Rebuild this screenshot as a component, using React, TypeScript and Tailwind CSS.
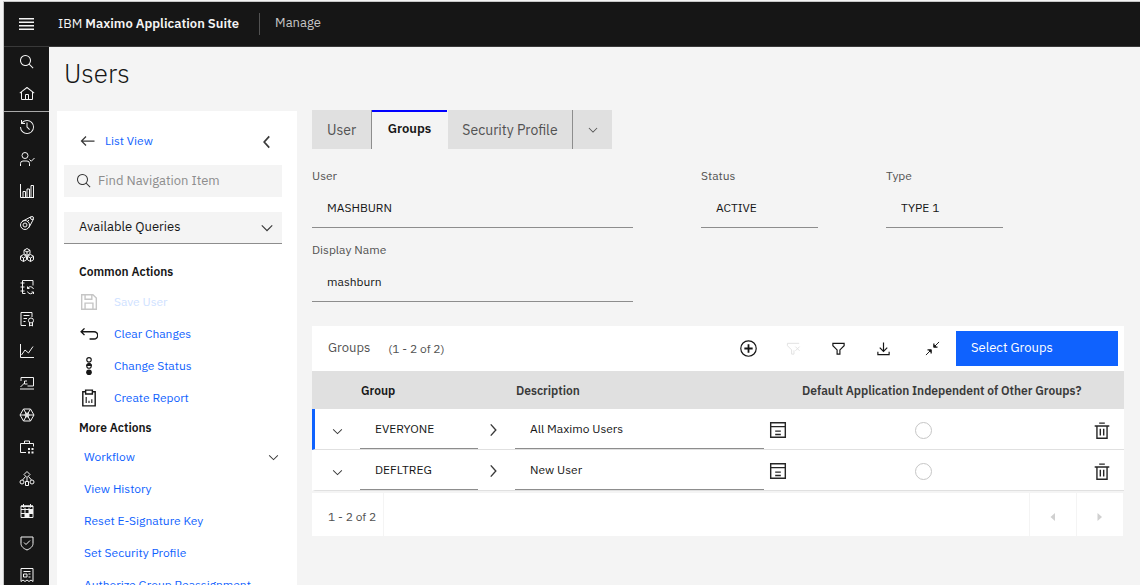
import React from "react";

type IconProps = { className?: string; children?: React.ReactNode };

/** 32-unit icon canvas: outlines by default, children may opt into fills. */
function Icon({ className = "size-4", children }: IconProps) {
  return (
    <svg
      viewBox="0 0 32 32"
      className={`shrink-0 ${className}`}
      fill="none"
      stroke="currentColor"
      strokeWidth={2}
      aria-hidden="true"
    >
      {children}
    </svg>
  );
}

const solid = { fill: "currentColor", stroke: "none" } as const;

const SearchGlyph = () => (
  <path
    {...solid}
    d="M29,27.586l-7.552-7.552a11.018,11.018,0,1,0-1.414,1.414L27.586,29ZM4,13a9,9,0,1,1,9,9A9.01,9.01,0,0,1,4,13Z"
  />
);
const ChevronDown = () => (
  <path {...solid} d="M16 22 6 12l1.4-1.4 8.6 8.6 8.6-8.6L26 12z" />
);

const railTop: [string, React.ReactNode][] = [
  ["Search", <SearchGlyph />],
  [
    "Home",
    <path
      {...solid}
      d="M16.612,2.214a1.01,1.01,0,0,0-1.243,0L1,13.42l1.243,1.571L4,13.62V26a2,2,0,0,0,2,2H26a2,2,0,0,0,2-2V13.63L29.757,15,31,13.428ZM18,26H14V18h4Zm2,0V18a2,2,0,0,0-2-2H14a2,2,0,0,0-2,2v8H6V12.06l10-7.79,10,7.8V26Z"
    />,
  ],
];

const railItems: [string, React.ReactNode][] = [
  [
    "Recent",
    <g {...solid}>
      <path d="M20.59 22 15 16.41V7h2v8.58l5 5.01z" />
      <path d="M16,2A13.94,13.94,0,0,0,6,6.23V2H4v8h8V8H7.08A12,12,0,1,1,4,16H2A14,14,0,1,0,16,2Z" />
    </g>,
  ],
  [
    "Administration",
    <>
      <circle cx="12" cy="9" r="6" />
      <path d="M3 30v-5a5 5 0 0 1 5-5h8a5 5 0 0 1 5 5v5M21 17l3.5 3.5L31 14" />
    </>,
  ],
  [
    "Analytics",
    <path d="M3 2v27h27M8 29V17h5v12M16 29V12h5v17M24 29V5h5v24" />,
  ],
  [
    "Assets",
    <>
      <circle cx="12" cy="20" r="9" />
      <circle cx="12" cy="20" r="4" />
      <circle cx="26" cy="6" r="3" />
      <path d="M6 13 24 3.5M20 25l9-17M17 13l3-3" />
    </>,
  ],
  [
    "Inventory",
    <path d="m16 3 6 3.5v7L16 17l-6-3.5v-7zM16 9v8M10 6.5l6 3.5 6-3.5M9 15l6 3.5v7L9 29l-6-3.5v-7zM9 22v7M3 18.5 9 22l6-3.5M23 15l6 3.5v7L23 29l-6-3.5v-7zM23 22v7M17 18.5l6 3.5 6-3.5" />,
  ],
  [
    "Planning",
    <>
      <path d="M13 29H7V3h21v10M3 8h8M3 16h8M3 24h8" />
      <path d="M29 20a6.5 6.5 0 0 0-12-1v-4M17 19h4M17 25a6.5 6.5 0 0 0 12 1v4M29 26h-4" />
    </>,
  ],
  [
    "Contracts",
    <>
      <path d="M14 29H4V3h22v9M9 9h12M9 15h7M9 21h4" />
      <circle cx="24" cy="19" r="5" />
      <path d="M21 23v7l3-2 3 2v-7" />
    </>,
  ],
  ["Performance", <path d="M3 2v27h27M5 24l7-10 7 6 9-13" />],
  [
    "Self Service",
    <>
      <path d="M4 12V5h25v17H17M2 28h28" />
      <path d="M3 24l8-8M16 12h-5v6h6" />
    </>,
  ],
  [
    "Service Desk",
    <>
      <path d="M9 4h14l7 12-7 12H9L2 16z" />
      <path d="M9 4l14 24M23 4 9 28M2 16h28" />
      <circle cx="16" cy="16" r="4" />
    </>,
  ],
  [
    "Work Orders",
    <>
      <path d="M14 27H3V9h26v6M11 9V4h10v5" />
      <path {...solid} d="M18 18h4v4h-4zM25 18h4v4h-4zM18 25h4v4h-4zM25 25h4v4h-4z" />
    </>,
  ],
  [
    "Integration",
    <>
      <path d="m16 1 6 6-6 6-6-6z" />
      <path d="M16 13v8M13 11l-6 7M19 11l6 7" />
      <circle cx="6" cy="22" r="4" />
      <path d="M13 21h6v8h-6z" />
      <circle cx="26" cy="22" r="4" />
    </>,
  ],
  [
    "Scheduling",
    <>
      <path d="M4 6h24v23H4zM9 2v7M23 2v7M4 13h24M12 9v20M20 9v20M4 21h24" />
      <path {...solid} d="M20 13h8v8h-8zM12 21h8v8h-8zM4 5h24v3H4z" />
    </>,
  ],
  [
    "Security",
    <path d="M4 4h24v13c0 6-5 10-12 13C9 27 4 23 4 17zM10 15l4 4 8-8" />,
  ],
  [
    "Financial",
    <path d="M4 3h24v26l-4-3-4 3-4-3-4 3-4-3-4 3zM9 9h14M9 14h7v6H9zM19 14h4M19 20h4" />,
  ],
];

function RailButton({ label, glyph }: { label: string; glyph: React.ReactNode }) {
  return (
    <button aria-label={label} className="flex h-8 w-full items-center justify-center pb-0.5">
      <Icon>{glyph}</Icon>
    </button>
  );
}

const commonActions: { label: string; disabled?: boolean; glyph: React.ReactNode }[] = [
  {
    label: "Save User",
    disabled: true,
    glyph: <path strokeWidth={2.5} d="M3 3h20l6 6v20H3zM9 3v8h12V3M9 29V18h14v11" />,
  },
  {
    label: "Clear Changes",
    glyph: <path strokeWidth={2.5} d="M8 6 2 12l6 6M2 12h23a5 5 0 0 1 0 13h-8" />,
  },
  {
    label: "Change Status",
    glyph: (
      <>
        <circle cx="16" cy="5" r="4" />
        <circle cx="16" cy="16" r="4" />
        <path {...solid} d="M11 16h10a5 5 0 0 0-10-1z" />
        <circle cx="16" cy="27" r="5" {...solid} />
      </>
    ),
  },
  {
    label: "Create Report",
    glyph: (
      <>
        <path strokeWidth={2.5} d="M10 5H5v25h22V5h-5M10 2h12v7H10z" />
        <path d="M11 14v11M16 21v4M21 18v7" />
      </>
    ),
  },
];

const moreActions = [
  "Workflow",
  "View History",
  "Reset E-Signature Key",
  "Set Security Profile",
  "Authorize Group Reassignment",
];

function Field({ id, label, value, className }: { id: string; label: string; value: string; className: string }) {
  return (
    <div className={className}>
      <label htmlFor={id} className="block h-4 leading-4 text-[#525252]">
        {label}
      </label>
      <input
        id={id}
        defaultValue={value}
        className="mt-1 block h-10 w-full border-b border-[#8d8d8d] bg-transparent px-[15px] text-[#161616] outline-none"
      />
    </div>
  );
}

const groups = [
  { name: "EVERYONE", description: "All Maximo Users", active: true },
  { name: "DEFLTREG", description: "New User", active: false },
];

const toolButton = "flex size-8 items-center justify-center";
const cell = "border-b border-[#e0e0e0] p-0";
const cellInput = "block h-10 w-full border-b border-[#8d8d8d] px-[15px] outline-none";
const headCell = "p-0 pt-0.5 pl-px font-semibold";

function GroupsTable() {
  return (
    <section className="mt-6">
      <div className="flex h-[45px] items-center bg-white pr-1.5 pl-4">
        <h2 className="pb-0.5 text-[13px] text-[#525252]">Groups</h2>
        <span className="ml-[18px] text-[#525252]">(1 - 2 of 2)</span>
        <div className="ml-auto flex items-center gap-[13px] pr-2">
          <button aria-label="New row" className={toolButton}>
            <Icon className="size-[19px]">
              <circle cx="16" cy="16" r="13" />
              <path strokeWidth={3} d="M16 9v14M9 16h14" />
            </Icon>
          </button>
          <button aria-label="Clear filter" disabled className={`${toolButton} text-[#e0e0e0]`}>
            <Icon className="size-[15px]">
              <path d="M28 5H3v5l9 9v9h5v-8M20 12l9 9M29 12l-9 9" />
            </Icon>
          </button>
          <button aria-label="Filter" className={toolButton}>
            <Icon className="size-[15px]">
              <path strokeWidth={2.5} d="M4 5h24v5l-9 9v9h-6v-9l-9-9z" />
            </Icon>
          </button>
          <button aria-label="Download" className={toolButton}>
            <Icon className="size-[15px]">
              <path strokeWidth={2.5} d="M16 3v19M8 14l8 8 8-8M4 23v6h24v-6" />
            </Icon>
          </button>
          <button aria-label="Collapse" className={`${toolButton} ml-1`}>
            <Icon className="size-[15px]">
              <path d="M19 5v8h8M19 13 30 2M5 19h8v8M13 19 2 30" />
              <path {...solid} d="M18 6v8h8zM6 18h8v8z" />
            </Icon>
          </button>
        </div>
        <button className="h-[35px] w-[162px] bg-[#0f62fe] px-[15px] pb-0.5 text-left text-[13px] text-white">
          Select Groups
        </button>
      </div>

      <table className="w-full table-fixed border-separate border-spacing-0 bg-white">
        <colgroup>
          <col className="w-12" />
          <col className="w-[118px]" />
          <col className="w-[37px]" />
          <col />
          <col className="w-[38px]" />
          <col className="w-[110px]" />
          <col className="w-[168px]" />
          <col className="w-11" />
        </colgroup>
        <thead>
          <tr className="h-[38px] bg-[#e0e0e0] text-left whitespace-nowrap text-[#393939]">
            <td />
            <th className={`${headCell} text-[#161616]`}>Group</th>
            <td />
            <th className={headCell}>Description</th>
            <td />
            <th className="p-0 pt-0.5 font-semibold">Default Application</th>
            <th className="p-0 pt-0.5 font-semibold">Independent of Other Groups?</th>
            <td />
          </tr>
        </thead>
        <tbody>
          {groups.map((g) => (
            <tr key={g.name} className="h-[41px]">
              <td className={`${cell} border-l-[3px] ${g.active ? "border-l-[#0f62fe]" : "border-l-white"}`}>
                <button aria-label="Row details" className="ml-1.5 flex size-8 items-center justify-center pt-1">
                  <Icon className="size-[15px] text-[#393939]"><ChevronDown /></Icon>
                </button>
              </td>
              <td className={`${cell} align-top`}>
                <input aria-label="Group" defaultValue={g.name} className={cellInput} />
              </td>
              <td className={cell}>
                <button aria-label="Group menu" className="mx-auto flex size-7 items-center justify-center pt-0.5 pr-2">
                  <Icon className="size-[18px] text-[#393939]">
                    <path strokeWidth={2.5} d="m12 6 9 10-9 10" />
                  </Icon>
                </button>
              </td>
              <td className={`${cell} align-top`}>
                <input aria-label="Description" defaultValue={g.description} className={cellInput} />
              </td>
              <td className={cell}>
                <button aria-label="Long description" className="flex size-7 items-center justify-center pt-0.5">
                  <Icon className="size-[18px] text-[#262626]">
                    <path strokeWidth={2.5} d="M3 3h26v26H3zM3 10h26M11 18h10M11 24h10" />
                  </Icon>
                </button>
              </td>
              <td className={cell} />
              <td className={cell}>
                <input
                  type="radio"
                  aria-label={`Independent of Other Groups: ${g.name}`}
                  className="mt-0.5 ml-[3px] block size-[17px] appearance-none rounded-full border border-[#c6c6c6] bg-white"
                />
              </td>
              <td className={cell}>
                <button aria-label="Delete row" className="mx-auto flex size-7 items-center justify-center pt-1">
                  <Icon className="size-[18px] text-[#262626]">
                    <path strokeWidth={2.5} d="M3 7h26M7 7v22h18V7M11 2h10M13 12v12M19 12v12" />
                  </Icon>
                </button>
              </td>
            </tr>
          ))}
        </tbody>
      </table>

      <div className="mt-0.5 flex h-[43px] items-stretch bg-white text-[#525252]">
        <span className="flex w-[72px] items-center border-r border-[#f4f4f4] pt-1 pl-4 whitespace-nowrap">1 - 2 of 2</span>
        <button
          aria-label="Previous page"
          disabled
          className="ml-auto flex w-12 items-center justify-center border-x border-[#f4f4f4] pt-1 text-[#d0d0d0]"
        >
          <Icon className="size-4"><path {...solid} d="M20 24l-9-8 9-8z" /></Icon>
        </button>
        <button
          aria-label="Next page"
          disabled
          className="flex w-[47px] items-center justify-center border-r border-[#f4f4f4] pt-1 text-[#d0d0d0]"
        >
          <Icon className="size-4"><path {...solid} d="M11 8l9 8-9 8z" /></Icon>
        </button>
      </div>
    </section>
  );
}

function NavigationPanel() {
  return (
    <aside className="w-60 shrink-0 bg-white px-[7px] pt-4">
      <div className="flex h-7 items-center pl-4">
        <a href="#list" className="flex items-center gap-[9px] text-[#0f62fe]">
          <Icon className="size-4 text-[#393939]">
            <path strokeWidth={2.5} d="M12 7l-9 9 9 9M3 16h26" />
          </Icon>
          List View
        </a>
        <button aria-label="Collapse panel" className="mr-[7px] ml-auto flex size-8 items-center justify-center pt-0.5">
          <Icon className="size-[18px] text-[#393939]">
            <path strokeWidth={3} d="M20 6 11 16l9 10" />
          </Icon>
        </button>
      </div>

      <div className="mt-2.5 mr-2 flex h-8 items-center gap-1.5 bg-[#f4f4f4] px-3">
        <Icon className="size-4 text-[#393939]"><SearchGlyph /></Icon>
        <input
          aria-label="Find Navigation Item"
          placeholder="Find Navigation Item"
          className="w-full min-w-0 bg-transparent text-[13px] outline-none placeholder:text-[#8d8d8d]"
        />
      </div>

      <button className="mt-[15px] mr-2 flex h-8 w-[218px] items-center justify-between border-b border-[#8d8d8d] bg-[#f4f4f4] pr-1.5 pl-[15px] text-[13px]">
        <span className="pb-0.5">Available Queries</span>
        <Icon className="size-[18px] text-[#393939]"><ChevronDown /></Icon>
      </button>

      <h2 className="mt-5 ml-[15px] h-4 leading-4 font-semibold">Common Actions</h2>
      <ul className="mt-1.5 ml-4">
        {commonActions.map((a) => (
          <li key={a.label}>
            <button
              disabled={a.disabled}
              className={`flex h-8 items-center gap-4 ${a.disabled ? "text-[#d0e2ff]" : "text-[#0f62fe]"}`}
            >
              <Icon className={a.disabled ? "size-[18px] text-[#c6c6c6]" : "size-[18px] text-[#161616]"}>{a.glyph}</Icon>
              {a.label}
            </button>
          </li>
        ))}
      </ul>

      <h2 className="mt-1.5 ml-[15px] h-4 leading-4 font-semibold">More Actions</h2>
      <ul className="mt-[5px] ml-5">
        {moreActions.map((label) => (
          <li key={label} className="flex h-8 items-center justify-between pr-[9px]">
            <a href="#action" className="whitespace-nowrap text-[#0f62fe]">{label}</a>
            {label === "Workflow" && <Icon className="size-[15px] text-[#393939]"><ChevronDown /></Icon>}
          </li>
        ))}
      </ul>
    </aside>
  );
}

export default function App() {
  return (
    <div className="flex h-screen flex-col overflow-hidden border-t border-[#f4f4f4] bg-[#f4f4f4] pl-[3px] font-['IBM_Plex_Sans',Inter,sans-serif] text-xs text-[#161616]">
      <div className="flex min-h-0 flex-1 flex-col border-t border-l border-[#c6c6c6]">
        <header className="flex h-[45px] shrink-0 items-center border-b border-[#393939] bg-[#161616] text-[#f4f4f4]">
          <button aria-label="Menu" className="flex w-[45px] items-center justify-center">
            <svg viewBox="0 0 15 12" className="h-3 w-[15px]" fill="currentColor" aria-hidden="true">
              <path d="M0 0h15v1.500H0zM0 3.500h15V5H0zM0 7h15v1.500H0zM0 10.500h15V12H0z" />
            </svg>
          </button>
          <span className="ml-[9px] text-[13px] font-semibold whitespace-nowrap">
            <span className="font-normal">IBM</span> Maximo Application Suite
          </span>
          <span className="ml-5 h-[22px] border-l border-[#525252]" />
          <span className="ml-[15px] pb-0.5 text-[13px] text-[#c6c6c6]">Manage</span>
        </header>

        <div className="flex min-h-0 flex-1">
          <nav aria-label="Applications" className="w-[45px] shrink-0 overflow-hidden bg-[#161616] text-[#f4f4f4]">
            <div className="border-b border-[#a8a8a8]">
              {railTop.map(([label, glyph]) => (
                <RailButton key={label} label={label} glyph={glyph} />
              ))}
            </div>
            {railItems.map(([label, glyph]) => (
              <RailButton key={label} label={label} glyph={glyph} />
            ))}
          </nav>

          <main className="flex min-w-0 flex-1 flex-col pr-4 pl-2">
            <h1 className="h-16 shrink-0 pt-2 pl-[7px] text-[26px] leading-9 font-light">Users</h1>
            <div className="flex min-h-0 flex-1">
              <NavigationPanel />
              <div className="ml-[15px] min-w-0 flex-1">
                <div role="tablist" className="-mt-px flex h-[39px] text-sm text-[#525252]">
                  <button role="tab" className="w-[60px] border-r border-[#8d8d8d] bg-[#e0e0e0]">User</button>
                  <button
                    role="tab"
                    aria-selected="true"
                    className="mr-px w-[75px] border-t-2 border-[#0000ff] pb-0.5 text-[13px] font-semibold text-[#161616]"
                  >
                    Groups
                  </button>
                  <button role="tab" className="w-[125px] border-r border-[#8d8d8d] bg-[#e0e0e0]">Security Profile</button>
                  <button aria-label="More tabs" className="flex w-[39px] items-center justify-center bg-[#e0e0e0]">
                    <Icon className="size-[14px]"><ChevronDown /></Icon>
                  </button>
                </div>

                <div className="mt-[19px] flex">
                  <Field id="user" label="User" value="MASHBURN" className="w-[321px]" />
                  <Field id="status" label="Status" value="ACTIVE" className="ml-[68px] w-[117px]" />
                  <Field id="type" label="Type" value="TYPE 1" className="ml-[68px] w-[117px]" />
                </div>
                <Field id="display" label="Display Name" value="mashburn" className="mt-3.5 w-[321px]" />

                <GroupsTable />
              </div>
            </div>
          </main>
        </div>
      </div>
    </div>
  );
}
